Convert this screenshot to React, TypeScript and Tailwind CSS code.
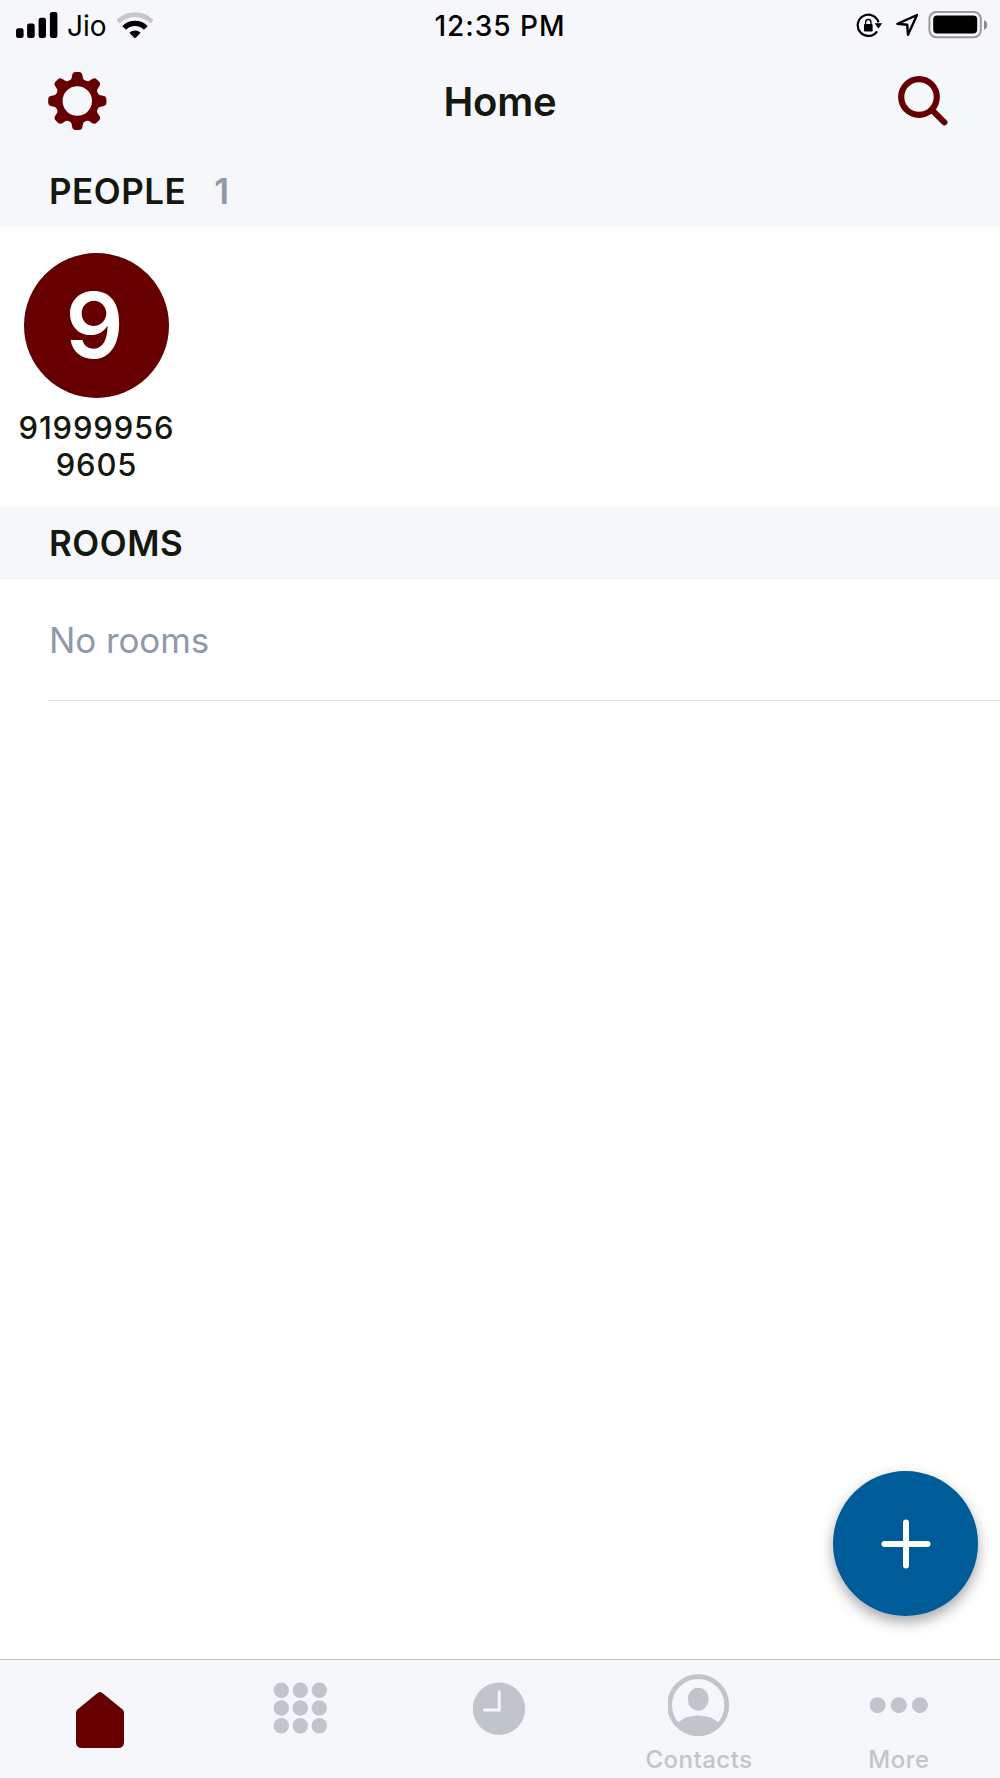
import React from "react";

interface SectionHeaderProps {
    title: string;
    count?: number;
    className?: string;
}

interface TabProps {
    label?: string;
    children: React.ReactNode;
}

const SignalIcon = () => (
    <svg width="42" height="26" viewBox="0 0 42 26">
        <rect x="0" y="16.3" width="7.6" height="9.7" rx="2.2" />
        <rect x="11.1" y="11.5" width="7.6" height="14.5" rx="2.2" />
        <rect x="22.6" y="5.8" width="7.4" height="20.2" rx="2.2" />
        <rect x="33.9" y="0" width="7.5" height="26" rx="2.2" />
    </svg>
);

const WifiIcon = () => (
    <svg width="36" height="27" viewBox="0 0 36 27" fill="none">
        <path d="M0.9 9.9 A23.8 23.8 0 0 1 35.1 9.9" stroke="#c5c7ca" strokeWidth="4.8" />
        <path d="M7.2 16 A15 15 0 0 1 28.8 16" stroke="#000" strokeWidth="5.4" />
        <path d="M12.4 20.8 A8 8 0 0 1 23.6 20.8 L19 25.6 Q18 26.6 17 25.6 Z" fill="#000" />
    </svg>
);

const RotationLockIcon = () => (
    <svg width="27" height="25" viewBox="0 0 27 25" fill="none">
        <path d="M21.1 18.3 A10.6 10.6 0 1 1 22.5 9.4" stroke="#000" strokeWidth="2.2" />
        <path d="M18.6 10.3 H26.2 L22.4 15.6 Z" fill="#000" />
        <rect x="8" y="11" width="8.6" height="7.6" rx="0.8" fill="#000" />
        <path d="M9.6 11.5 V9.2 A2.7 2.7 0 0 1 15 9.2 V11.5" stroke="#000" strokeWidth="1.3" />
    </svg>
);

const LocationIcon = () => (
    <svg width="24" height="24" viewBox="0 0 24 24" fill="none">
        <path
            d="M22 2 L2.4 10.8 L12.2 11.8 L13 21.8 Z"
            stroke="#000"
            strokeWidth="2.4"
            strokeLinejoin="round"
        />
    </svg>
);

const BatteryIcon = () => (
    <svg width="60" height="28" viewBox="0 0 60 28" fill="none">
        <rect x="1.4" y="0.9" width="51.4" height="25.4" rx="7" stroke="#99999b" strokeWidth="2" />
        <rect x="5.2" y="4.6" width="44" height="18" rx="4" fill="#000" />
        <path d="M56 9 Q59.2 10.6 59.2 14 Q59.2 17.4 56 19 Z" fill="#8b8b8d" />
    </svg>
);

const GearIcon = () => (
    <svg width="60" height="60" viewBox="-30.3 -30 60 60">
        <circle r="18.3" fill="none" stroke="#660000" strokeWidth="7.2" />
        {[0, 45, 90, 135, 180, 225, 270, 315].map((angle) => (
            <path
                key={angle}
                transform={`rotate(${angle})`}
                fill="#660000"
                d="M-8.4 -19.8 C-6.4 -21 -5.6 -22.6 -5.4 -24.6 Q-5 -29.1 -1.8 -29.1 H1.8 Q5 -29.1 5.4 -24.6 C5.6 -22.6 6.4 -21 8.4 -19.8 Z"
            />
        ))}
    </svg>
);

const SearchIcon = () => (
    <svg width="52" height="52" viewBox="0 0 52 52" fill="none" stroke="#660000" strokeLinecap="round">
        <circle cx="22" cy="22" r="17.8" strokeWidth="6.2" />
        <path d="M35 35 L47.4 47.3" strokeWidth="6" />
    </svg>
);

const SectionHeader: React.FC<SectionHeaderProps> = ({ title, count, className = "" }) => (
    <div className={`flex h-[73px] shrink-0 items-center bg-[#f5f7fb] pl-[49px] text-[35px] font-semibold ${className}`}>
        <h2 className="tracking-[0.5px]">{title}</h2>
        {count !== undefined && <span className="ml-[28px] text-[#8e99a9]">{count}</span>}
    </div>
);

const Tab: React.FC<TabProps> = ({ label, children }) => (
    <button className="flex flex-1 flex-col items-center">
        <div className="flex h-[88px] items-center justify-center">{children}</div>
        {label && (
            <span className="-ml-[2px] text-[24px] leading-6 font-medium tracking-[0.5px]">{label}</span>
        )}
    </button>
);

export default function App() {
    return (
        <div className="relative flex h-[1778px] w-[1000px] flex-col overflow-hidden bg-white font-['Inter',sans-serif] text-[#15180f]">
            {/* Status bar */}
            <div className="grid h-[50px] shrink-0 grid-cols-3 items-center bg-[#f5f7fb] text-[28px] text-black">
                <div className="flex items-center pl-4">
                    <SignalIcon />
                    <span className="mt-px ml-[9px] w-[50px]">Jio</span>
                    <WifiIcon />
                </div>
                <span className="mt-px text-center font-medium tracking-[1px]">12:35 PM</span>
                <div className="flex items-center justify-end pr-3">
                    <RotationLockIcon />
                    <span className="ml-[12px] mr-[9px]"><LocationIcon /></span>
                    <BatteryIcon />
                </div>
            </div>

            {/* Navigation bar */}
            <div className="flex h-[104px] shrink-0 items-center justify-between bg-[#f5f7fb] pr-[51px] pl-[47px]">
                <button className="-mt-[3px]"><GearIcon /></button>
                <h1 className="-ml-1 text-[40px] font-semibold tracking-[-0.2px]">Home</h1>
                <button className="-mt-[2px]"><SearchIcon /></button>
            </div>

            {/* People */}
            <SectionHeader title="PEOPLE" count={1} className="pt-px" />
            <div className="flex h-[280px] shrink-0 pt-[26px]">
                <div className="flex w-[193px] flex-col items-center">
                    <div className="flex size-[145px] items-center justify-center rounded-full bg-[#660000] pr-[4px] pb-px text-[91px] leading-none font-semibold text-white">
                        9
                    </div>
                    <p className="mt-[11px] text-center text-[31px] leading-[37px] font-medium tracking-[0.85px]">
                        91999956
                        <br />
                        9605
                    </p>
                </div>
            </div>

            {/* Rooms */}
            <SectionHeader title="ROOMS" />
            <div className="ml-12 flex h-[121px] shrink-0 items-center border-b border-[#e1e7ee] pl-px text-[35px] tracking-[-0.1px] text-[#8e99a9]">
                No rooms
            </div>
            <div className="flex-1" />

            {/* Floating add button */}
            <button className="absolute top-[1471px] left-[833px] flex size-[145px] items-center justify-center rounded-full bg-[#005c99] shadow-[0_6px_14px_rgba(0,0,0,0.35)]">
                <svg width="50" height="50" viewBox="0 0 50 50" stroke="#fff" strokeWidth="6" strokeLinecap="round">
                    <path d="M25 3.5 V46.5 M3.5 25 H46.5" />
                </svg>
            </button>

            {/* Tab bar */}
            <div className="flex h-[119px] shrink-0 border-t border-[#c0c2c6] bg-[#f5f7fb] text-[#c0c5cc]">
                <Tab>
                    <svg className="mt-8" width="48" height="56" viewBox="0 0 48 56" fill="#660000">
                        <path d="M21.6 0.9 Q24 -0.9 26.4 0.9 L46.6 17.6 Q48 18.8 48 20.8 V50 Q48 56 42 56 H6 Q0 56 0 50 V20.8 Q0 18.8 1.4 17.6 Z" />
                    </svg>
                </Tab>
                <Tab>
                    <svg className="mt-2" width="54" height="52" viewBox="0 0 54 52" fill="currentColor">
                        {[8.2, 26, 43.8].map((y) =>
                            [8.3, 27.3, 46.3].map((x) => <circle key={`${x}-${y}`} cx={x} cy={y} r="7.7" />)
                        )}
                    </svg>
                </Tab>
                <Tab>
                    <svg className="mt-2" width="54" height="54" viewBox="0 0 54 54" fill="currentColor">
                        <circle cx="26" cy="27.8" r="26.2" />
                        <path d="M26.2 10.5 V29 H11.5" fill="none" stroke="#f5f7fb" strokeWidth="3" strokeLinecap="round" />
                    </svg>
                </Tab>
                <Tab label="Contacts">
                    <svg width="64" height="64" viewBox="0 0 64 64" fill="currentColor">
                        <circle cx="30.2" cy="33.2" r="28.6" fill="none" stroke="currentColor" strokeWidth="4.8" />
                        <ellipse cx="30.2" cy="27.2" rx="10.4" ry="11.5" />
                        <path d="M10.2 50.2 Q17.7 43.4 30.2 43.4 Q42.7 43.4 50.2 50.2 Q42.7 61.7 30.2 61.7 Q17.7 61.7 10.2 50.2 Z" />
                    </svg>
                </Tab>
                <Tab label="More">
                    <svg width="60" height="18" viewBox="0 0 60 18" fill="currentColor">
                        <circle cx="7.7" cy="10.2" r="8" />
                        <circle cx="28.8" cy="10.2" r="8" />
                        <circle cx="49.9" cy="10.2" r="8" />
                    </svg>
                </Tab>
            </div>
        </div>
    );
}
